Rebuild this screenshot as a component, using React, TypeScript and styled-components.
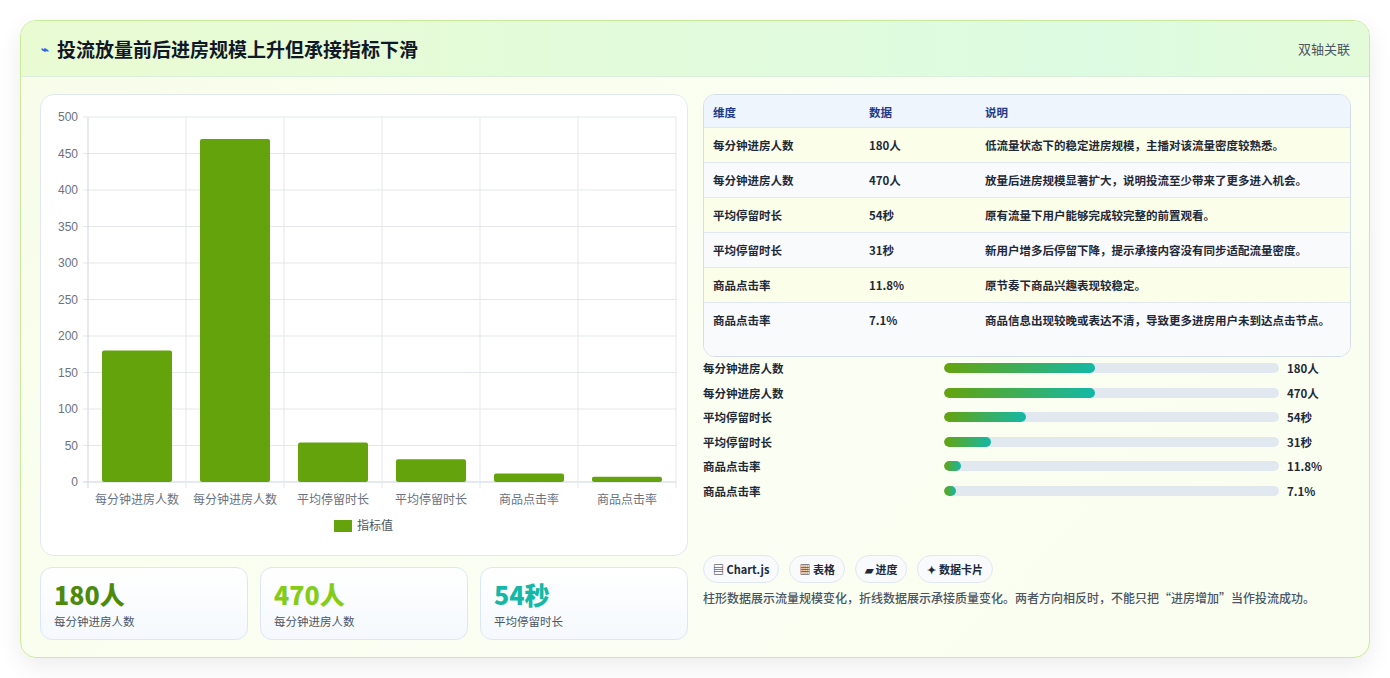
import React from "react";
import styled, { createGlobalStyle } from "styled-components";

const G = createGlobalStyle`
  html,body{margin:0;padding:0;background:#fff;}
  body{font-family:"Noto Sans CJK SC","Noto Sans",sans-serif;color:#1f2937;}
`;
const Page = styled.div`padding:20px 20px 20px 20px;width:1390px;box-sizing:border-box;`;
const Card = styled.div`
  width:1350px;height:638px;box-sizing:border-box;border:1px solid #c9ec9a;border-radius:16px;
  background:linear-gradient(135deg,#f7fde9,#fbfff3 50%,#f9fef0);
  box-shadow:0 8px 24px rgba(0,0,0,0.08);overflow:hidden;display:flex;flex-direction:column;`;
const Header = styled.div`
  height:55px;flex:none;display:flex;align-items:center;justify-content:space-between;padding:0 19px 0 20px;
  background:linear-gradient(90deg,#eafbd2,#ddfbe2 80%,#e4fbd9);border-bottom:1px solid #dceedd;`;
const Title = styled.h1`margin:0;font-size:19px;font-weight:700;color:#111827;display:flex;align-items:center;gap:8px;`;
const Tag = styled.span`font-size:13px;color:#4b5563;`;
const Body = styled.div`display:grid;grid-template-columns:648px 648px;gap:15px;padding:17px 19px 18px 19px;flex:1;`;
const Col = styled.div`display:flex;flex-direction:column;gap:11px;`;
const ChartBox = styled.div`height:462px;box-sizing:border-box;background:#fff;border:1px solid #e2e8f0;border-radius:14px;`;
const Stats = styled.div`display:grid;grid-template-columns:repeat(3,1fr);gap:12px;`;
const Stat = styled.div`height:73px;box-sizing:border-box;border:1px solid #dbe7f3;border-radius:12px;background:linear-gradient(180deg,#fff,#f5f9fd);padding:9px 13px;`;
const StatVal = styled.div<{c:string}>`font-size:25px;font-weight:800;color:${p=>p.c};line-height:34px;`;
const StatLab = styled.div`font-size:11.5px;color:#4b5563;margin-top:2px;`;
const Table = styled.div`border:1px solid #d5dde8;border-radius:12px;overflow:hidden;background:#fff;`;
const Row = styled.div<{h?:number;bg:string}>`
  display:grid;grid-template-columns:156px 116px 1fr;padding:0 9px;min-height:${p=>p.h||35}px;box-sizing:border-box;
  background:${p=>p.bg};border-bottom:1px solid #e2e8f0;font-size:11.5px;align-items:start;padding-top:9px;
  &:last-child{border-bottom:none;}`;
const HeadCell = styled.div`color:#1e3a8a;font-weight:700;`;
const Cell = styled.div<{b?:boolean}>`font-weight:${p=>p.b?600:500};color:#1f2937;line-height:17px;padding-right:10px;`;
const Bars = styled.div`display:flex;flex-direction:column;gap:8.5px;margin-top:3px;`;
const BarRow = styled.div`display:grid;grid-template-columns:241px 335px 1fr;gap:0;align-items:center;height:16px;font-size:11.5px;font-weight:600;`;
const Track = styled.div`height:10px;border-radius:5px;background:#e2e8f0;overflow:hidden;`;
const Fill = styled.div`height:100%;border-radius:5px;background:linear-gradient(90deg,#65a30d,#14b8a6);`;
const BarVal = styled.span`padding-left:8px;`;
const Chips = styled.div`display:flex;gap:10px;margin-top:56px;`;
const Chip = styled.span`height:28px;box-sizing:border-box;border:1px solid #e2e8f0;border-radius:14px;background:#f8fafc;padding:0 9px;display:flex;align-items:center;gap:3px;font-size:11px;font-weight:600;color:#1f2937;`;
const Note = styled.p`margin:4px 0 0;font-size:12px;line-height:21px;color:#4b5563;font-weight:500;`;

const cats=["每分钟进房人数","每分钟进房人数","平均停留时长","平均停留时长","商品点击率","商品点击率"];
const vals=[180,470,54,31,11.8,7.1];

function Chart(){
  const L=47,R=635,T=22,B=387,w=(R-L)/6;
  const y=(v:number)=>B-(v/500)*(B-T);
  return <svg width="646" height="460" style={{display:"block"}}>
    {[0,50,100,150,200,250,300,350,400,450,500].map(v=><g key={v}>
      <line x1={L-5} x2={R} y1={y(v)} y2={y(v)} stroke={v===0?"#cbd5e1":"#e5e7eb"}/>
      <text x={L-10} y={y(v)+4} fontSize="12" textAnchor="end" fill="#6b7280" fontFamily="Liberation Sans">{v}</text></g>)}
    {Array.from({length:7}).map((_,i)=><line key={i} x1={L+i*w} x2={L+i*w} y1={T} y2={B+6} stroke={i===0?"#cbd5e1":"#e5e7eb"}/>)}
    {vals.map((v,i)=><rect key={i} x={L+i*w+14} width={w-28} y={y(v)} height={B-y(v)} rx="2" fill="#65a30d"/>)}
    {cats.map((c,i)=><text key={i} x={L+i*w+w/2} y={B+22} fontSize="12" textAnchor="middle" fill="#6b7280">{c}</text>)}
    <rect x="293" y="425" width="18" height="12" fill="#65a30d"/>
    <text x="316" y="435" fontSize="12" fill="#4b5563">指标值</text>
  </svg>;
}

const rows=[["每分钟进房人数","180人","低流量状态下的稳定进房规模，主播对该流量密度较熟悉。"],["每分钟进房人数","470人","放量后进房规模显著扩大，说明投流至少带来了更多进入机会。"],["平均停留时长","54秒","原有流量下用户能够完成较完整的前置观看。"],["平均停留时长","31秒","新用户增多后停留下降，提示承接内容没有同步适配流量密度。"],["商品点击率","11.8%","原节奏下商品兴趣表现较稳定。"],["商品点击率","7.1%","商品信息出现较晚或表达不清，导致更多进房用户未到达点击节点。"]];
const pct=[45,45,24.5,14,5,3.5];

export default function App(){
  return <Page><G/><Card>
    <Header><Title><span style={{fontSize:13,color:"#2563eb"}}>⌁</span>投流放量前后进房规模上升但承接指标下滑</Title><Tag>双轴关联</Tag></Header>
    <Body>
      <Col>
        <ChartBox><Chart/></ChartBox>
        <Stats>
          <Stat><StatVal c="#4d8a0c">180人</StatVal><StatLab>每分钟进房人数</StatLab></Stat>
          <Stat><StatVal c="#84cc16">470人</StatVal><StatLab>每分钟进房人数</StatLab></Stat>
          <Stat><StatVal c="#14b8a6">54秒</StatVal><StatLab>平均停留时长</StatLab></Stat>
        </Stats>
      </Col>
      <Col style={{gap:0}}>
        <Table>
          <Row bg="#eef5fd" h={33}><HeadCell>维度</HeadCell><HeadCell>数据</HeadCell><HeadCell>说明</HeadCell></Row>
          {rows.map((r,i)=><Row key={i} bg={i%2?"#f8fafc":"#fbfee9"} h={i===5?53:35}><Cell b>{r[0]}</Cell><Cell b>{r[1]}</Cell><Cell b>{r[2]}</Cell></Row>)}
        </Table>
        <Bars>
          {rows.map((r,i)=><BarRow key={i}><span>{r[0]}</span><Track><Fill style={{width:pct[i]+"%"}}/></Track><BarVal>{r[1]}</BarVal></BarRow>)}
        </Bars>
        <Chips><Chip>▤ Chart.js</Chip><Chip>▦ 表格</Chip><Chip>▰ 进度</Chip><Chip>✦ 数据卡片</Chip></Chips>
        <Note>柱形数据展示流量规模变化，折线数据展示承接质量变化。两者方向相反时，不能只把“进房增加”当作投流成功。</Note>
      </Col>
    </Body>
  </Card></Page>;
}
